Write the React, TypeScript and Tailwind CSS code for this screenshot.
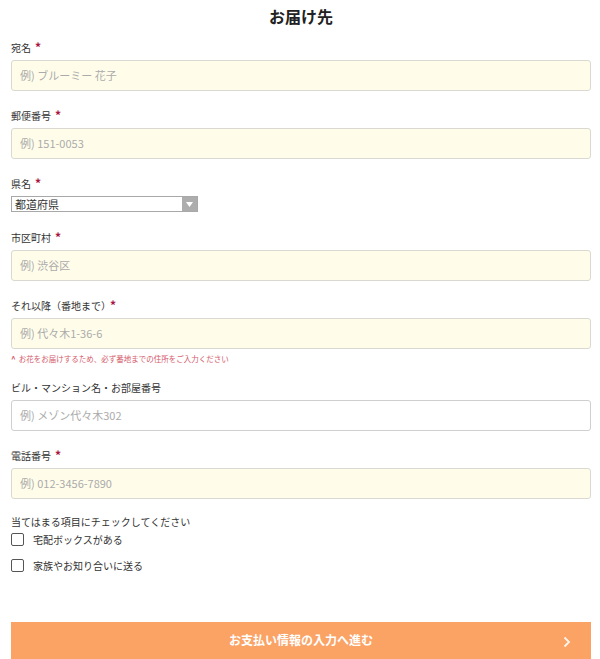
import React from "react";

const Star = ({ ml = "ml-[4px]" }: { ml?: string }) => (
  <span className={`${ml} text-[#a8163f] text-[12px] font-bold leading-none relative top-[-1px]`}>*</span>
);

const Field = ({
  label,
  placeholder,
  required = true,
  white = false,
  starMl,
  note,
}: {
  label: string;
  placeholder: string;
  required?: boolean;
  white?: boolean;
  starMl?: string;
  note?: string;
}) => (
  <div className="mb-[18px]">
    <div className="flex items-center h-[14px] text-[10px] leading-[14px] text-[#333] mb-[5px]">
      <span>{label}</span>
      {required && <Star ml={starMl} />}
    </div>
    <div
      className={`h-[31px] w-full rounded-[3px] border ${
        white ? "bg-white border-[#cfcfcf]" : "bg-[#fffdea] border-[#d9d9d2]"
      } flex items-center pl-[8px] text-[11px] text-[#ababab]`}
    >
      {placeholder}
    </div>
    {note && (
      <div className="mt-[4px] text-[7.5px] leading-[12px] text-[#d4596a] flex items-center">
        <span className="text-[8px] mr-[3px] font-bold">^</span>
        {note}
      </div>
    )}
  </div>
);

export default function App() {
  return (
    <div
      className="w-[600px] bg-white pl-[11px] pr-[9px]"
      style={{ fontFamily: '"Noto Sans CJK JP", "Noto Sans", sans-serif' }}
    >
      <div className="h-[41px] pt-[4px] text-center text-[16px] font-bold leading-[24px] text-[#222]">
        お届け先
      </div>
      <Field label="宛名" placeholder="例) ブルーミー 花子" />
      <Field label="郵便番号" placeholder="例) 151-0053" />
      <div className="mb-[19px]">
        <div className="flex items-center h-[14px] text-[10px] leading-[14px] text-[#333] mb-[5px]">
          <span>県名</span>
          <Star />
        </div>
        <div className="h-[16px] w-[187px] border border-[#a8a8a8] flex items-stretch bg-white">
          <div className="flex-1 flex items-center pl-[3px] text-[11px] leading-none text-[#333]">
            都道府県
          </div>
          <div className="w-[15px] bg-[#adadad] flex items-center justify-center">
            <svg width="7" height="5" viewBox="0 0 7 5">
              <path d="M0 0 L7 0 L3.5 5 Z" fill="#fff" />
            </svg>
          </div>
        </div>
      </div>
      <Field label="市区町村" placeholder="例) 渋谷区" />
      <div className="-mb-[2px]">
        <Field
          label="それ以降（番地まで）"
          placeholder="例) 代々木1-36-6"
          starMl="ml-[-1px]"
          note="お花をお届けするため、必ず番地までの住所をご入力ください"
        />
      </div>
      <Field label="ビル・マンション名・お部屋番号" placeholder="例) メゾン代々木302" required={false} white />
      <Field label="電話番号" placeholder="例) 012-3456-7890" />
      <div className="-mt-[2px] text-[10px] leading-[14px] text-[#333]">当てはまる項目にチェックしてください</div>
      <div className="mt-[3px] flex items-center h-[14px]">
        <div className="w-[13px] h-[13px] border border-[#555] rounded-[2px] bg-white" />
        <span className="ml-[9px] text-[10px] text-[#333]">宅配ボックスがある</span>
      </div>
      <div className="mt-[12px] flex items-center h-[14px]">
        <div className="w-[13px] h-[13px] border border-[#555] rounded-[2px] bg-white" />
        <span className="ml-[9px] text-[10px] text-[#333]">家族やお知り合いに送る</span>
      </div>
      <div className="mt-[50px] h-[46px] w-full bg-[#fba265] relative flex items-center justify-center text-white font-bold text-[12px] pb-[10px]">
        お支払い情報の入力へ進む
        <svg
          className="absolute right-[20px] top-[14px]"
          width="8"
          height="12"
          viewBox="0 0 8 12"
        >
          <path d="M1.5 1.5 L6 6 L1.5 10.5" stroke="#fff5ea" strokeWidth="1.8" fill="none" />
        </svg>
      </div>
    </div>
  );
}
